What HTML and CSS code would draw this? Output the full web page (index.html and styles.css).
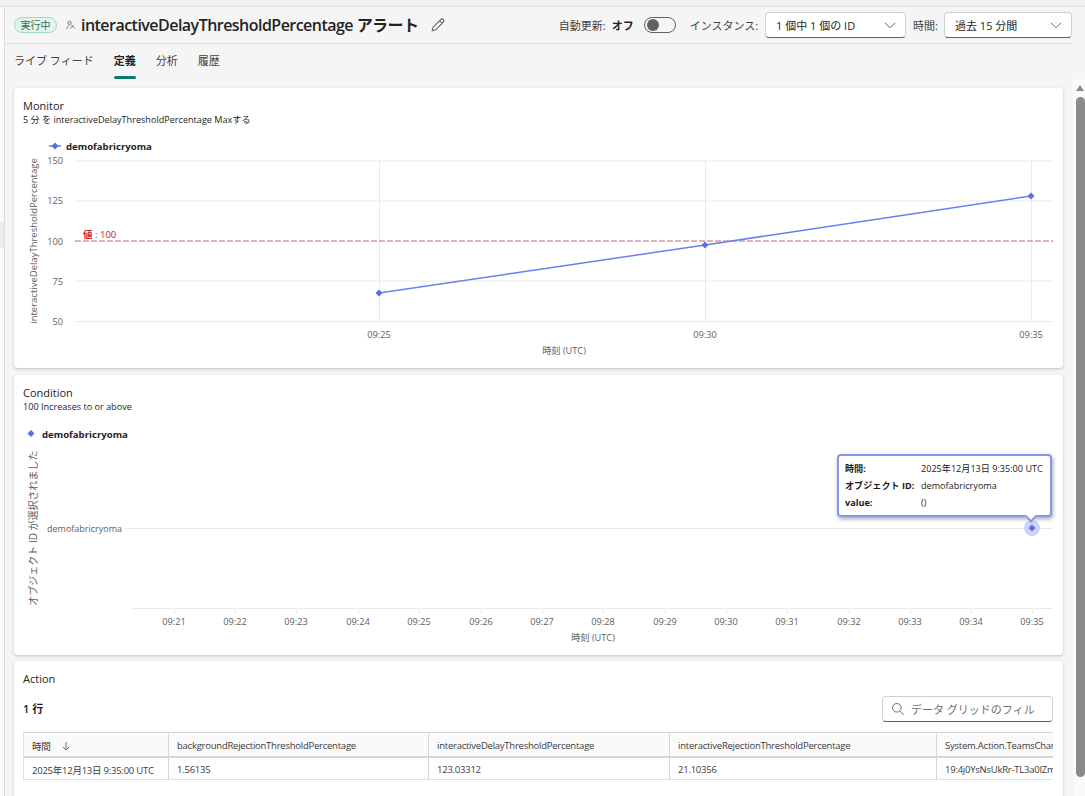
FILE: index.html
```html
<!DOCTYPE html>
<html lang="ja">
<head>
<meta charset="utf-8">
<title>interactiveDelayThresholdPercentage アラート</title>
<link rel="stylesheet" href="styles.css">
</head>
<body>
<div class="topstrip"></div>
<div class="shell">
  <div class="rail"><div class="rail-item"></div></div>
  <main class="main">
    <header class="header">
      <span class="badge">実行中</span>
      <svg class="pin" viewBox="0 0 10 10" width="10" height="10"><path d="M3.5 1.2a1.6 1.6 0 1 1 0 3.2 1.6 1.6 0 0 1 0-3.2zM1 8.8c0-2 1-3.2 2.6-3.2M5 4.6l3.6 3.8M4.2 8.6l3.4-3.4" fill="none" stroke="#777" stroke-width="1"/></svg>
      <h1 class="title">interactiveDelayThresholdPercentage アラート</h1>
      <svg class="pencil" viewBox="0 0 16 16" width="16" height="16"><path d="M2.2 13.8l.9-3.6 7.6-7.6a1.7 1.7 0 0 1 2.6 2.6l-7.6 7.6zM9.7 3.6l2.6 2.6" fill="none" stroke="#616161" stroke-width="1.1"/></svg>
      <div class="controls">
        <span class="ctl-label">自動更新:</span>
        <strong class="ctl-value">オフ</strong>
        <span class="toggle"><span class="knob"></span></span>
        <span class="ctl-label ctl-inst">インスタンス:</span>
        <div class="select select-inst"><span>1 個中 1 個の ID</span><svg viewBox="0 0 12 12" width="12" height="12"><path d="M1 3.8l5 5 5-5" fill="none" stroke="#616161"/></svg></div>
        <span class="ctl-label ctl-time">時間:</span>
        <div class="select select-time"><span>過去 15 分間</span><svg viewBox="0 0 12 12" width="12" height="12"><path d="M1 3.8l5 5 5-5" fill="none" stroke="#616161"/></svg></div>
      </div>
    </header>
    <nav class="tabs">
      <span class="tab">ライブ フィード</span>
      <span class="tab active">定義</span>
      <span class="tab">分析</span>
      <span class="tab">履歴</span>
    </nav>
    <section class="card card-chart">
      <h2 class="card-title">Monitor</h2>
      <p class="card-sub">5 分 を interactiveDelayThresholdPercentage Maxする</p>
      <svg class="chart" viewBox="14 132 1049 236" width="1049" height="236">
        <g class="grid">
          <path d="M75 161H1053M75 201H1053M75 281H1053M75 321.5H1053M379.5 161V321M705.5 161V321M1031.5 161V321"/>
        </g>
        <path class="threshold" d="M75 241H1053"/>
        <text class="thr-label" x="83" y="238"><tspan class="thr-strong">値</tspan> : 100</text>
        <g class="ticks end">
          <text x="63" y="164">150</text><text x="63" y="204">125</text><text x="63" y="245">100</text><text x="63" y="285">75</text><text x="63" y="325">50</text>
        </g>
        <g class="ticks mid">
          <text x="379" y="338">09:25</text><text x="705" y="338">09:30</text><text x="1031" y="338">09:35</text>
          <text x="564" y="354">時刻 (UTC)</text>
        </g>
        <text class="axis-title axis-mon" transform="translate(37 241) rotate(-90)">interactiveDelayThresholdPercentage</text>
        <path class="series" d="M49 146H61"/>
        <path class="marker" d="M55 142.5l3.5 3.5-3.5 3.5-3.5-3.5z"/>
        <text class="legend" x="66" y="150">demofabricryoma</text>
        <path class="series" d="M379 293L705 245L1031 196"/>
        <path class="marker" d="M379 289.5l3.5 3.5-3.5 3.5-3.5-3.5zM705 241.5l3.5 3.5-3.5 3.5-3.5-3.5zM1031 192.5l3.5 3.5-3.5 3.5-3.5-3.5z"/>
      </svg>
    </section>
    <section class="card card-chart card-cond">
      <h2 class="card-title">Condition</h2>
      <p class="card-sub">100 Increases to or above</p>
      <svg class="chart" viewBox="14 419 1049 236" width="1049" height="236">
        <path class="marker" d="M31 430l3.5 3.5-3.5 3.5-3.5-3.5z"/>
        <text class="legend" x="42" y="438">demofabricryoma</text>
        <text class="axis-title" transform="translate(37 528) rotate(-90)">オブジェクト ID が選択されました</text>
        <text class="ticks cat" x="47" y="532">demofabricryoma</text>
        <g class="grid">
          <path d="M125 528.5H1053M133 608.5H1053M174.5 609V614M235.5 609V614M296.5 609V614M358.5 609V614M419.5 609V614M481.5 609V614M542.5 609V614M603.5 609V614M665.5 609V614M726.5 609V614M787.5 609V614M849.5 609V614M910.5 609V614M971.5 609V614M1032.5 609V614"/>
        </g>
        <g class="ticks mid">
          <text x="174" y="625">09:21</text><text x="235" y="625">09:22</text><text x="296" y="625">09:23</text><text x="358" y="625">09:24</text><text x="419" y="625">09:25</text><text x="481" y="625">09:26</text><text x="542" y="625">09:27</text><text x="603" y="625">09:28</text><text x="665" y="625">09:29</text><text x="726" y="625">09:30</text><text x="787" y="625">09:31</text><text x="849" y="625">09:32</text><text x="910" y="625">09:33</text><text x="971" y="625">09:34</text><text x="1032" y="625">09:35</text>
          <text x="593" y="641">時刻 (UTC)</text>
        </g>
        <circle class="halo" cx="1032" cy="528" r="8"/>
        <path class="marker" d="M1032 524.5l3.5 3.5-3.5 3.5-3.5-3.5z"/>
      </svg>
      <div class="tooltip">
        <div class="tip-grid">
          <b>時間:</b><span class="tip-right">2025年12月13日 9:35:00 UTC</span>
          <b>オブジェクト ID:</b><span>demofabricryoma</span>
          <b>value:</b><span>()</span>
        </div>
        <span class="tip-arrow"></span>
      </div>
    </section>
    <section class="card card-action">
      <h2 class="card-title">Action</h2>
      <div class="grid-bar">
        <strong class="rows">1 行</strong>
        <div class="filter">
          <svg viewBox="0 0 14 14" width="14" height="14"><path d="M5.8 1.5a4.3 4.3 0 1 1 0 8.6 4.3 4.3 0 0 1 0-8.6zM9 9.2l3.8 3.8" fill="none" stroke="#707070"/></svg>
          <span>データ グリッドのフィル</span>
        </div>
      </div>
      <div class="table">
        <div class="row row-head">
          <div class="cell">時間<svg class="sort" viewBox="0 0 10 10" width="10" height="10"><path d="M5 1v8M2 6l3 3 3-3" fill="none" stroke="#707070"/></svg></div>
          <div class="cell">backgroundRejectionThresholdPercentage</div>
          <div class="cell">interactiveDelayThresholdPercentage</div>
          <div class="cell">interactiveRejectionThresholdPercentage</div>
          <div class="cell">System.Action.TeamsChannelId</div>
        </div>
        <div class="row">
          <div class="cell">2025年12月13日 9:35:00 UTC</div>
          <div class="cell">1.56135</div>
          <div class="cell">123.03312</div>
          <div class="cell">21.10356</div>
          <div class="cell">19:4j0YsNsUkRr-TL3a0IZmQxPq</div>
        </div>
      </div>
    </section>
  </main>
  <div class="scrollbar">
    <span class="arrow"></span>
    <span class="thumb"></span>
  </div>
</div>
</body>
</html>
```
FILE: styles.css
```css
* { box-sizing: border-box; }
html, body { margin: 0; height: 100%; overflow: hidden; }
body {
  background: #f5f5f5;
  color: #242424;
  font-family: "Open Sans", "Noto Sans CJK JP", sans-serif;
  font-size: 10px;
  width: 1085px;
  height: 796px;
}
.topstrip { height: 7px; background: #f0f0f0; border-bottom: 1px solid #e0e0e0; }
.shell { display: flex; height: 789px; }
.rail { width: 5px; flex: none; background: #fafafa; border-right: 1px solid #dcdcdc; padding-top: 215px; }
.rail-item { height: 26px; width: 4px; background: #ececec; }
.main { width: 1068px; flex: none; padding: 0 10px 0 9px; overflow: hidden; }
.header { height: 37px; margin: 0 -10px 0 -9px; padding: 0 1px 0 9px; border-bottom: 1px solid #e0e0e0; display: flex; align-items: center; }
.badge { width: 43px; height: 16px; border: 1px solid #9fdcc4; border-radius: 8px; background: #e0f6ec; color: #3f6b5a; font-size: 10px; line-height: 14px; text-align: center; flex: none; }
.pin { margin-left: 9px; flex: none; }
.title { margin: 0 0 0 5px; font-size: 16px; font-weight: 600; letter-spacing: -0.53px; white-space: nowrap; line-height: 22px; }
.pencil { margin-left: 11px; flex: none; }
.controls { margin-left: auto; display: flex; align-items: center; font-size: 11px; }
.ctl-label { white-space: nowrap; color: #424242; }
.ctl-value { margin-left: 6px; font-weight: 700; }
.toggle { margin-left: 10px; width: 32px; height: 16px; border: 1px solid #616161; border-radius: 8px; display: flex; align-items: center; padding-left: 2px; }
.knob { width: 12px; height: 12px; border-radius: 50%; background: #616161; }
.ctl-inst { margin-left: 14px; }
.ctl-time { margin-left: 7px; }
.select { height: 26px; margin-left: 6px; background: #fff; border: 1px solid #d1d1d1; border-bottom-color: #616161; border-radius: 4px; padding: 0 9px 0 10px; display: flex; align-items: center; justify-content: space-between; color: #242424; }
.select-inst { width: 141px; margin-left: 7px; }
.select-time { width: 128px; }
.tabs { height: 36px; display: flex; gap: 20px; margin-top: 0; padding-top: 9px; }
.tab { position: relative; font-size: 11px; line-height: 16px; color: #424242; white-space: nowrap; height: 27px; }
.tab.active { font-weight: 700; color: #242424; }
.tab.active::after { content: ""; position: absolute; left: 0; right: 0; top: 23px; height: 3px; border-radius: 2px; background: #0b7a68; }
.card { background: #fff; border-radius: 4px; box-shadow: 0 1px 3px rgba(0,0,0,.22); position: relative; }
.card-chart { height: 280px; padding-top: 10px; margin-top: 8px; }
.card-cond { margin-top: 7px; }
.card-title { margin: 0; padding-left: 9px; font-size: 11px; font-weight: 400; line-height: 15px; }
.card-sub { margin: 0; padding-left: 9px; font-size: 9.1px; line-height: 13px; height: 13px; white-space: nowrap; }
.chart { display: block; position: absolute; left: 0; bottom: 0; }
.grid path { fill: none; stroke: #eaeaea; stroke-width: 1; }
.threshold { fill: none; stroke: #c2646a; stroke-width: 1; stroke-dasharray: 6 2; }
.thr-label { font-size: 9.5px; fill: #c4262e; }
.thr-strong { font-weight: 700; }
.ticks, .ticks text { font-size: 9.2px; fill: #605e5c; }
.cat { font-size: 9px; }
.end text { text-anchor: end; }
.mid text { text-anchor: middle; }
.axis-title { font-size: 10px; fill: #605e5c; text-anchor: middle; }
.axis-mon { font-size: 9.5px; }
.series { fill: none; stroke: #6a7ff0; stroke-width: 1.5; }
.marker { fill: #5b6fe6; }
.legend { font-size: 9.6px; font-weight: 700; fill: #242424; }
.halo { fill: #ccd3f6; }
.tooltip { position: absolute; left: 823px; top: 79px; width: 215px; height: 63px; background: #fff; border: 2px solid #8496e6; border-radius: 4px; box-shadow: 1px 2px 4px rgba(0,0,0,.35); padding: 6px 6px; }
.tip-grid { display: grid; grid-template-columns: 76px 1fr; row-gap: 3px; font-size: 9.1px; line-height: 14px; white-space: nowrap; color: #1a1a1a; }
.tip-grid b { font-weight: 700; }
.tip-arrow { position: absolute; left: 188px; bottom: -6px; width: 8px; height: 8px; background: #fff; border-right: 2px solid #8496e6; border-bottom: 2px solid #8496e6; transform: rotate(45deg); }
.card-action { margin-top: 6px; height: 160px; padding-top: 10px; }
.grid-bar { display: flex; justify-content: space-between; margin: 10px 10px 0 9px; height: 26px; }
.rows { font-size: 11px; font-weight: 600; line-height: 26px; }
.filter { width: 171px; height: 26px; background: #fff; border: 1px solid #d1d1d1; border-bottom-color: #616161; border-radius: 4px; display: flex; align-items: center; gap: 6px; padding-left: 8px; font-size: 11px; color: #707070; white-space: nowrap; overflow: hidden; }
.filter svg { flex: none; }
.table { margin: 10px 10px 0 9px; overflow: hidden; border-top: 1px solid #d6d6d6; border-bottom: 1px solid #e0e0e0; border-left: 1px solid #e0e0e0; }
.row { display: grid; grid-template-columns: 145px 260px 241px 267px 260px; width: 1173px; font-size: 9.5px; letter-spacing: -0.24px; color: #3b3b3b; white-space: nowrap; }
.row-head { background: #fafafa; height: 25px; border-bottom: 2px solid #d6d6d6; }
.row:not(.row-head) { height: 21px; }
.cell { padding: 2px 0 0 8px; border-right: 1px solid #d6d6d6; display: flex; align-items: center; overflow: hidden; }
.sort { margin-left: 10px; }
.scrollbar { width: 12px; flex: none; background: #fafafa; margin-top: 72px; position: relative; }
.arrow { position: absolute; right: 1px; top: 6px; width: 0; height: 0; border: 4px solid transparent; border-top: 0; border-bottom: 6px solid #8a8a8a; }
.thumb { position: absolute; left: 3px; top: 18px; width: 9px; height: 680px; background: #8a8a8a; border-radius: 5px; }
```
